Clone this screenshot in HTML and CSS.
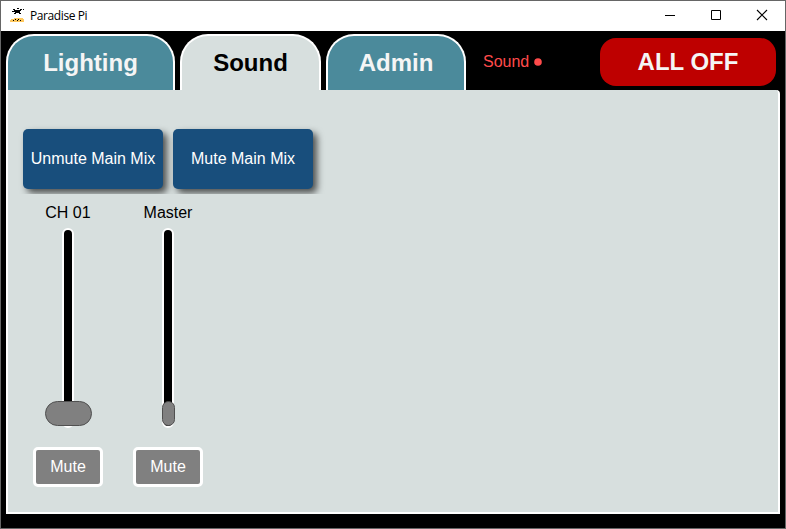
FILE: index.html
```html
<!DOCTYPE html>
<html lang="en">
<head>
<meta charset="utf-8">
<title>Paradise Pi</title>
<link rel="stylesheet" href="styles.css">
</head>
<body>
<div class="window">
  <header class="titlebar">
    <svg class="logo" width="16" height="16" viewBox="0 0 16 16" shape-rendering="crispEdges">
      <path fill="#ffc85c" d="M5 10h9v1h1v3H1v-2h1v-1h3z"/>
      <path fill="#000" d="M4 1h2v1H4zM8 0h2v1H8zM11 1h2v1h-2zM14 1h1v1h-1zM5 2h7v1H5zM3 3h8v1H3zM6 4h5v1H6zM5 5h2v1H5zM10 5h2v1h-2zM6 11h1v1H6zM9 11h1v1H9zM4 12h1v1H4zM8 12h1v1H8zM11 12h1v1h-1z"/>
    </svg>
    <span class="title">Paradise Pi</span>
    <div class="controls">
      <svg width="46" height="29" viewBox="0 0 46 29"><path d="M18 14.5h10" stroke="#000"/></svg>
      <svg width="46" height="29" viewBox="0 0 46 29"><path d="M18.5 9.5h9v9h-9z" fill="none" stroke="#000"/></svg>
      <svg width="46" height="29" viewBox="0 0 46 29"><path d="M18 9l10 10M28 9l-10 10" fill="none" stroke="#000" stroke-width="1.1"/></svg>
    </div>
  </header>
  <nav class="tabs">
    <div class="tab lighting">Lighting</div>
    <div class="tab active">Sound</div>
    <div class="tab">Admin</div>
    <div class="status">Sound <svg width="8" height="9" viewBox="0 0 8 9"><circle cx="4" cy="4" r="3.8" fill="#ff4b4b"/></svg></div>
    <div class="all-off">ALL OFF</div>
  </nav>
  <main class="panel">
    <div class="actions">
      <div class="action">Unmute Main Mix</div>
      <div class="action">Mute Main Mix</div>
    </div>
    <div class="channels">
      <section class="channel">
        <div class="label">CH 01</div>
        <div class="track"><div class="handle"></div></div>
        <div class="mute">Mute</div>
      </section>
      <section class="channel">
        <div class="label">Master</div>
        <div class="track"><div class="handle narrow"></div></div>
        <div class="mute">Mute</div>
      </section>
    </div>
  </main>
</div>
</body>
</html>
```
FILE: styles.css
```css
* { box-sizing: border-box; }
body {
  margin: 0;
  font-family: "Liberation Sans", Arial, sans-serif;
  font-size: 16px;
  color: #000;
}
.window {
  display: flex;
  flex-direction: column;
  width: 786px;
  height: 529px;
  border: 1px solid #666;
  background: #000;
  overflow: hidden;
}
.titlebar {
  display: flex;
  flex: none;
  height: 30px;
  padding-left: 8px;
  background: #fff;
}
.logo { margin-top: 7px; }
.title {
  margin-left: 5px;
  font: 12px/29px "Open Sans", "Noto Sans", sans-serif;
  letter-spacing: -0.4px;
}
.controls { display: flex; margin-left: auto; }
.tabs {
  display: flex;
  flex: none;
  gap: 5px;
  height: 59px;
  padding: 3px 9px 0 5px;
}
.tab {
  width: 140px;
  height: 56px;
  border: 2px solid #fff;
  border-bottom: 0;
  border-radius: 28px 28px 0 0;
  background: #4b8a9b;
  color: #f5f5f5;
  font-size: 24px;
  font-weight: bold;
  line-height: 54px;
  text-align: center;
}
.lighting { width: 169px; }
.active { width: 141px; background: #d7dfde; color: #000; }
.status {
  margin-left: 12px;
  color: #ff4b4b;
  line-height: 55px;
  white-space: nowrap;
}
.all-off {
  width: 176px;
  height: 48px;
  margin: 4px 0 0 auto;
  border-radius: 16px;
  background: #be0000;
  color: #f5f5f5;
  font-size: 24px;
  font-weight: bold;
  line-height: 48px;
  text-align: center;
}
.panel {
  width: 774px;
  height: 424px;
  margin-left: 5px;
  padding: 29px 10px 0;
  border: 2px solid #fff;
  border-top: 0;
  border-radius: 0 4px 0 0;
  background: #d7dfde;
}
.actions {
  display: flex;
  gap: 10px;
  height: 75px;
  padding: 10px 5px 0;
  overflow: hidden;
}
.action {
  width: 140px;
  height: 60px;
  border-radius: 5px;
  background: #184e7c;
  box-shadow: 4px 4px 7px rgba(0, 0, 0, .65);
  color: #fff;
  line-height: 60px;
  text-align: center;
}
.channels { display: flex; }
.channel {
  display: flex;
  flex-direction: column;
  align-items: center;
  width: 100px;
}
.label { height: 34px; line-height: 38px; }
.track {
  display: flex;
  justify-content: center;
  align-items: flex-end;
  width: 12px;
  height: 200px;
  border: 2px solid #fff;
  border-radius: 6px;
  background: #000;
}
.handle {
  flex: none;
  width: 47px;
  height: 25px;
  border: 1px solid #505050;
  border-radius: 13px;
  background: #808080;
}
.narrow { width: 13px; border-radius: 6.5px; }
.mute {
  width: 70px;
  height: 40px;
  margin-top: 19px;
  border: 3px solid #fff;
  border-radius: 5px;
  background: #808080;
  color: #fff;
  line-height: 34px;
  text-align: center;
}
```
